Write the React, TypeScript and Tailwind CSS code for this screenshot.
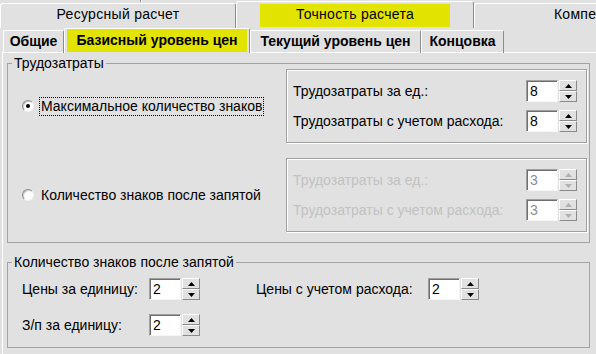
import type { ReactNode } from "react";

const BG = "bg-[#e1e1e1]";

function Arrow({ up, disabled }: { up?: boolean; disabled?: boolean }) {
  return (
    <div className="flex h-[11px] items-center justify-center border border-white border-r-[#8a8a8a] border-b-[#8a8a8a] bg-[#e1e1e1]">
      <svg width="7" height="4" viewBox="0 0 7 4">
        <polygon
          points={up ? "3.5,0 7,4 0,4" : "0,0 7,0 3.5,4"}
          fill={disabled ? "#b0b0b0" : "#000"}
        />
      </svg>
    </div>
  );
}

function SpinEdit({ value, disabled }: { value: string; disabled?: boolean }) {
  return (
    <div className="flex gap-[1px]">
      <div
        className={
          "flex h-[22px] w-[32px] items-center border border-[#a0a0a0] border-r-[#f6f6f6] border-b-[#f6f6f6] bg-white pl-[3px] leading-none shadow-[inset_1px_1px_0_#6e6e6e] " +
          (disabled ? "text-[#8c8c8c]" : "text-black")
        }
      >
        {value}
      </div>
      <div className="flex h-[22px] w-[18px] flex-col">
        <Arrow up disabled={disabled} />
        <Arrow disabled={disabled} />
      </div>
    </div>
  );
}

function Radio({ checked }: { checked?: boolean }) {
  return (
    <span className="flex h-[12px] w-[12px] items-center justify-center rounded-full border border-[#8e8e8e] border-r-[#f2f2f2] border-b-[#f2f2f2] bg-white shadow-[inset_1px_1px_0_#c8c8c8]">
      {checked && <span className="h-[4px] w-[4px] rounded-full bg-black" />}
    </span>
  );
}

function CostPanel({ value, disabled }: { value: string; disabled?: boolean }) {
  const label = disabled ? "text-[#c2c2c2]" : "text-black";
  return (
    <div className="flex w-[301px] flex-col gap-[8px] border border-[#a0a0a0] py-[10px] pr-[9px] pl-[6px] shadow-[inset_1px_1px_0_#fff,1px_1px_0_#fff]">
      <div className="flex items-center justify-between">
        <span className={label}>Трудозатраты за ед.:</span>
        <SpinEdit value={value} disabled={disabled} />
      </div>
      <div className="flex items-center justify-between">
        <span className={label}>Трудозатраты с учетом расхода:</span>
        <SpinEdit value={value} disabled={disabled} />
      </div>
    </div>
  );
}

function GroupBox({ title, className, children }: { title: string; className?: string; children: ReactNode }) {
  return (
    <fieldset className={"ml-[4px] w-[583px] border border-[#a3a3a3] " + (className ?? "")}>
      <legend className="ml-[4px] px-[2px] leading-[12px]">{title}</legend>
      {children}
    </fieldset>
  );
}

function OuterTab({ w, children }: { w: string; children: ReactNode }) {
  return (
    <div
      className={
        w +
        " flex h-[25px] shrink-0 items-center justify-center rounded-t-[3px] border-t border-l border-white border-r border-r-[#8c8c8c] pb-[3px] tracking-[0.3px]"
      }
    >
      {children}
    </div>
  );
}

function InnerTab({ w, children }: { w: string; children: ReactNode }) {
  return (
    <div
      className={
        w +
        " flex h-[23px] shrink-0 items-center justify-center rounded-t-[2px] border-t border-l border-white border-r border-r-[#8c8c8c] pb-[1px] font-bold"
      }
    >
      {children}
    </div>
  );
}

export default function App() {
  return (
    <div
      className={
        "h-[354px] w-[596px] overflow-hidden text-[14px] text-black font-['Liberation_Sans',Arial,sans-serif] " + BG
      }
    >
      {/* outer tabs */}
      <div className="relative flex h-[28px] items-end">
        <span className="absolute top-0 left-[140px] h-[2px] w-[1px] bg-[#8c8c8c]" />
        <span className="absolute top-0 left-[141px] h-[2px] w-[1px] bg-white" />
        <OuterTab w="w-[236px]">Ресурсный расчет</OuterTab>
        <div className="flex h-[27px] w-[238px] shrink-0 items-start justify-center rounded-t-[3px] border-t border-l border-white border-r border-r-[#8c8c8c] pt-[2px]">
          <div className="flex h-[23px] w-[190px] items-center justify-center bg-[#e3e300] pb-[3px] tracking-[0.3px]">
            Точность расчета
          </div>
        </div>
        <OuterTab w="w-[250px]">Компенсация</OuterTab>
      </div>

      {/* inner tabs */}
      <div className="-mb-[1px] flex items-end pl-[3px]">
        <InnerTab w="w-[61px]">Общие</InnerTab>
        <div className="relative z-10 flex h-[25px] w-[186px] shrink-0 justify-center rounded-t-[2px] border-t border-l border-white border-r border-r-[#8c8c8c] bg-[#e1e1e1]">
          <div className="flex h-[23px] w-[180px] items-center justify-center bg-[#e3e300] font-bold">
            Базисный уровень цен
          </div>
        </div>
        <InnerTab w="w-[171px]">Текущий уровень цен</InnerTab>
        <InnerTab w="w-[83px]">Концовка</InnerTab>
      </div>

      {/* page */}
      <div className="ml-[2px] h-full border-t border-l border-white pt-[4px]">
        <GroupBox title="Трудозатраты" className="pb-[10px]">
          <div className="flex items-center">
            <div className="flex w-[278px] items-center pl-[14px]">
              <Radio checked />
              <span className="ml-[5px] border border-dotted border-black px-[1px] leading-[17px]">
                Максимальное количество знаков
              </span>
            </div>
            <CostPanel value="8" />
          </div>
          <div className="mt-[15px] flex items-center">
            <div className="flex w-[278px] items-center pl-[14px]">
              <Radio />
              <span className="ml-[6px] px-[1px]">Количество знаков после запятой</span>
            </div>
            <CostPanel value="3" disabled />
          </div>
        </GroupBox>

        <GroupBox title="Количество знаков после запятой" className="mt-[13px] pt-[10px] pb-[11px]">
          <div className="grid grid-cols-[127px_51px_56px_172px_51px] items-center gap-y-[14px] pl-[14px]">
            <span>Цены за единицу:</span>
            <SpinEdit value="2" />
            <span />
            <span>Цены с учетом расхода:</span>
            <SpinEdit value="2" />
            <span>З/п за единицу:</span>
            <SpinEdit value="2" />
          </div>
        </GroupBox>
      </div>
    </div>
  );
}
